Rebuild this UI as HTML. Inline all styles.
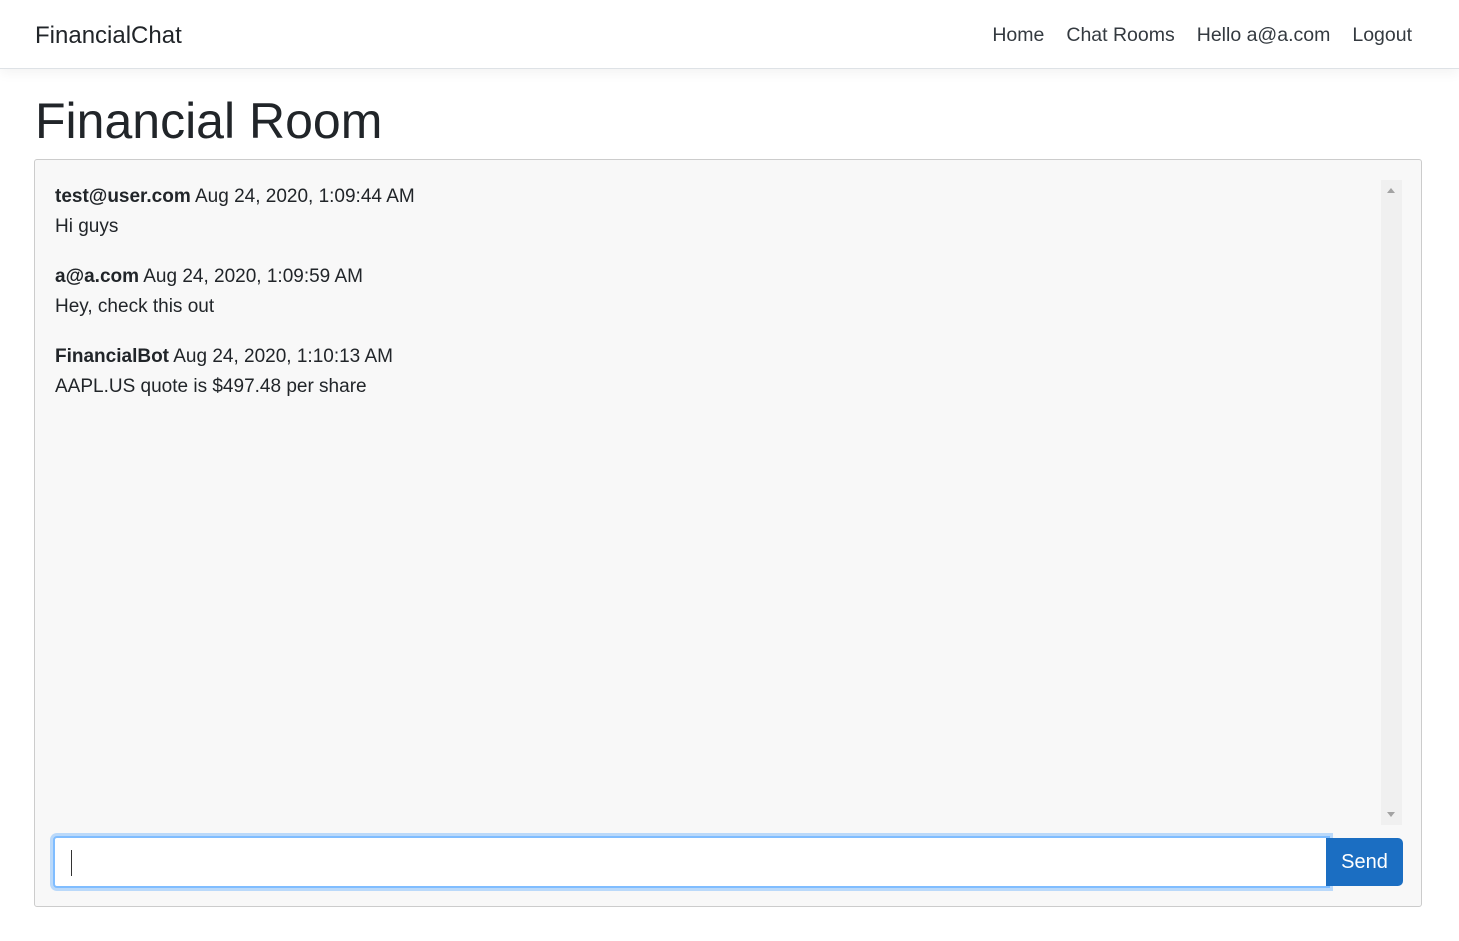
<!DOCTYPE html>
<html><head><meta charset="utf-8"><style>
*{box-sizing:border-box}
body{margin:0;font-family:"Liberation Sans",sans-serif;color:#212529;background:#fff;width:1459px;height:941px;overflow:hidden}
.nav{height:69px;border-bottom:1px solid #dee2e6;box-shadow:0 4px 12px rgba(0,0,0,.05);position:relative}
.brand{position:absolute;left:35px;top:22px;font-size:24px;color:#212529}
.links{position:absolute;right:47px;top:24px;font-size:19.5px;color:#343a40}
.links span{margin-left:22px}
h1{position:absolute;left:35px;top:92px;margin:0;font-size:50px;font-weight:500}
.panel{position:absolute;left:34px;top:159px;width:1388px;height:748px;border:1px solid #ccc;border-radius:3px;background:#f8f8f8}
.msgs{position:absolute;left:20px;top:22px;font-size:19px;line-height:30px}
.msgs p{margin:0 0 20px}
.sb{position:absolute;left:1346px;top:20px;width:21px;height:645px;background:#f0f0f0}
.sb:before{content:"";position:absolute;left:6px;top:8px;border:4px solid transparent;border-bottom:5px solid #a3a3a3;border-top:0}
.sb:after{content:"";position:absolute;left:6px;bottom:8px;border:4px solid transparent;border-top:5px solid #a3a3a3;border-bottom:0}
.inp{position:absolute;left:18px;top:676px;width:1277px;height:52px;background:#fff;border:2px solid #80bdff;box-shadow:0 0 0 3px rgba(0,123,255,.25);border-radius:4px 0 0 4px}
.inp:after{content:"";position:absolute;left:16px;top:12px;width:1px;height:26px;background:#333}
.btn{position:absolute;left:1291px;top:678px;width:77px;height:48px;background:#1b6ec2;border-radius:0 5px 5px 0;color:#fff;font-size:20px;text-align:center;line-height:48px}
</style></head><body>
<div class="nav"><div class="brand">FinancialChat</div>
<div class="links"><span>Home</span><span>Chat Rooms</span><span>Hello a@a.com</span><span>Logout</span></div></div>
<h1>Financial Room</h1>
<div class="panel">
<div class="msgs">
<p><b>test@user.com</b> Aug 24, 2020, 1:09:44 AM<br>Hi guys</p>
<p><b>a@a.com</b> Aug 24, 2020, 1:09:59 AM<br>Hey, check this out</p>
<p><b>FinancialBot</b> Aug 24, 2020, 1:10:13 AM<br>AAPL.US quote is $497.48 per share</p>
</div>
<div class="sb"></div>
<div class="inp"></div>
<div class="btn">Send</div>
</div>
</body></html>
